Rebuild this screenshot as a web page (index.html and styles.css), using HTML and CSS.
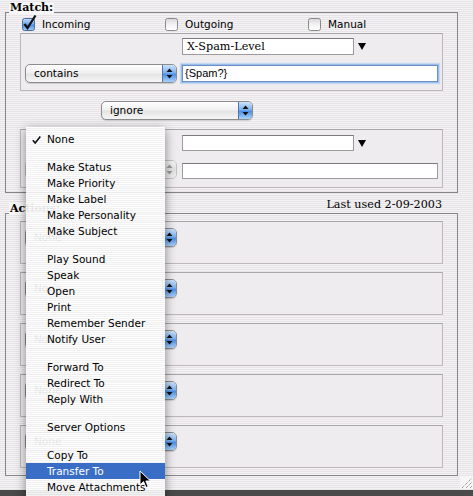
FILE: index.html
```html
<!DOCTYPE html>
<html>
<head>
<meta charset="utf-8">
<link rel="stylesheet" href="styles.css">
</head>
<body>
<div class="window">
  <div class="group-head">
    <span class="title">Match:</span>
  </div>
  <div class="group match">
    <div class="checks">
      <label class="check">
        <svg class="cb" width="16" height="16" viewBox="0 0 16 16">
          <defs>
            <linearGradient id="blue" x1="0" y1="0" x2="0" y2="1">
              <stop offset="0" stop-color="#c4dcf8"/>
              <stop offset="0.45" stop-color="#76aaea"/>
              <stop offset="0.55" stop-color="#4d8ce0"/>
              <stop offset="1" stop-color="#a6d0f8"/>
            </linearGradient>
          </defs>
          <rect x="0.5" y="3.5" width="12" height="12" rx="2" fill="url(#blue)" stroke="#4b6e9e"/>
          <path d="M2.5 9 L5.5 13 L13.5 0.5" fill="none" stroke="#111" stroke-width="2.2" stroke-linejoin="miter"/>
        </svg>
        <span>Incoming</span>
      </label>
      <label class="check">
        <svg class="cb" width="16" height="16" viewBox="0 0 16 16">
          <defs>
            <linearGradient id="gray" x1="0" y1="0" x2="0" y2="1">
              <stop offset="0" stop-color="#d8d8d8"/>
              <stop offset="0.5" stop-color="#f2f2f2"/>
              <stop offset="1" stop-color="#ffffff"/>
            </linearGradient>
          </defs>
          <rect x="0.5" y="3.5" width="12" height="12" rx="2" fill="url(#gray)" stroke="#8a8a8a"/>
        </svg>
        <span>Outgoing</span>
      </label>
      <label class="check">
        <svg class="cb" width="16" height="16" viewBox="0 0 16 16">
          <rect x="0.5" y="3.5" width="12" height="12" rx="2" fill="url(#gray)" stroke="#8a8a8a"/>
        </svg>
        <span>Manual</span>
      </label>
    </div>

    <div class="panel">
      <div class="row first">
        <div class="spacer"></div>
        <div class="field combo serif">X-Spam-Level</div>
        <svg class="tri" width="8" height="7" viewBox="0 0 8 7"><polygon points="0,0 8,0 4,7" fill="#000"/></svg>
      </div>
      <div class="row">
        <div class="popup">
          <span class="popup-text">contains</span>
          <span class="cap">
            <svg width="7" height="11" viewBox="0 0 7 11"><polygon points="3.5,0.5 6.5,4 0.5,4" fill="#111"/><polygon points="0.5,7 6.5,7 3.5,10.5" fill="#111"/></svg>
          </span>
        </div>
        <div class="field wide focus">{Spam?}</div>
      </div>
    </div>

    <div class="ignore-row">
      <div class="popup">
        <span class="popup-text">ignore</span>
        <span class="cap">
          <svg width="7" height="11" viewBox="0 0 7 11"><polygon points="3.5,0.5 6.5,4 0.5,4" fill="#111"/><polygon points="0.5,7 6.5,7 3.5,10.5" fill="#111"/></svg>
        </span>
      </div>
    </div>

    <div class="panel second">
      <div class="row first">
        <div class="spacer"></div>
        <div class="field combo short"></div>
        <svg class="tri" width="8" height="7" viewBox="0 0 8 7"><polygon points="0,0 8,0 4,7" fill="#000"/></svg>
      </div>
      <div class="row">
        <div class="popup disabled">
          <span class="popup-text">None</span>
          <span class="cap">
            <svg width="7" height="11" viewBox="0 0 7 11"><polygon points="3.5,0.5 6.5,4 0.5,4" fill="#9a9a9a"/><polygon points="0.5,7 6.5,7 3.5,10.5" fill="#9a9a9a"/></svg>
          </span>
        </div>
        <div class="field wide low"></div>
      </div>
    </div>
  </div>

  <div class="group-head actions-head">
    <span class="title">Actions:</span>
    <span class="last">Last used 2-09-2003</span>
  </div>
  <div class="group actions">
    <div class="panel action">
      <div class="popup"><span class="popup-text">None</span><span class="cap"><svg width="7" height="11" viewBox="0 0 7 11"><polygon points="3.5,0.5 6.5,4 0.5,4" fill="#111"/><polygon points="0.5,7 6.5,7 3.5,10.5" fill="#111"/></svg></span></div>
    </div>
    <div class="panel action">
      <div class="popup"><span class="popup-text">None</span><span class="cap"><svg width="7" height="11" viewBox="0 0 7 11"><polygon points="3.5,0.5 6.5,4 0.5,4" fill="#111"/><polygon points="0.5,7 6.5,7 3.5,10.5" fill="#111"/></svg></span></div>
    </div>
    <div class="panel action">
      <div class="popup"><span class="popup-text">None</span><span class="cap"><svg width="7" height="11" viewBox="0 0 7 11"><polygon points="3.5,0.5 6.5,4 0.5,4" fill="#111"/><polygon points="0.5,7 6.5,7 3.5,10.5" fill="#111"/></svg></span></div>
    </div>
    <div class="panel action">
      <div class="popup"><span class="popup-text">None</span><span class="cap"><svg width="7" height="11" viewBox="0 0 7 11"><polygon points="3.5,0.5 6.5,4 0.5,4" fill="#111"/><polygon points="0.5,7 6.5,7 3.5,10.5" fill="#111"/></svg></span></div>
    </div>
    <div class="panel action">
      <div class="popup"><span class="popup-text">None</span><span class="cap"><svg width="7" height="11" viewBox="0 0 7 11"><polygon points="3.5,0.5 6.5,4 0.5,4" fill="#111"/><polygon points="0.5,7 6.5,7 3.5,10.5" fill="#111"/></svg></span></div>
    </div>
  </div>

  <div class="footer">
    <svg class="grip" width="13" height="13" viewBox="0 0 13 13">
      <rect width="13" height="13" fill="#f6f6f6"/>
      <path d="M2 12 L12 2 M6 12 L12 6 M10 12 L12 10" stroke="#7a7a7a" stroke-width="1" stroke-dasharray="1 1"/>
    </svg>
  </div>
</div>

<div class="menu">
  <div class="item checked">
    <svg class="tick" width="9" height="8" viewBox="0 0 9 8"><path d="M0.8 4.2 L3.2 7 L8.3 0.6" fill="none" stroke="#111" stroke-width="1.6"/></svg>
    None
  </div>
  <div class="sep"></div>
  <div class="item">Make Status</div>
  <div class="item">Make Priority</div>
  <div class="item">Make Label</div>
  <div class="item">Make Personality</div>
  <div class="item">Make Subject</div>
  <div class="sep"></div>
  <div class="item">Play Sound</div>
  <div class="item">Speak</div>
  <div class="item">Open</div>
  <div class="item">Print</div>
  <div class="item">Remember Sender</div>
  <div class="item">Notify User</div>
  <div class="sep"></div>
  <div class="item">Forward To</div>
  <div class="item">Redirect To</div>
  <div class="item">Reply With</div>
  <div class="sep"></div>
  <div class="item">Server Options</div>
  <div class="sep"></div>
  <div class="item">Copy To</div>
  <div class="item active">Transfer To</div>
  <div class="item">Move Attachments</div>
</div>

<svg class="cursor" width="13" height="19" viewBox="0 0 13 19">
  <path d="M1 1 L1 15 L4.5 11.6 L7 17.5 L9.2 16.6 L6.8 11 L11.5 11 Z" fill="#000" stroke="#fff" stroke-width="1" stroke-linejoin="round"/>
</svg>
</body>
</html>
```

FILE: styles.css
```css
html, body {
  margin: 0;
  padding: 0;
}

body {
  width: 473px;
  height: 496px;
  overflow: hidden;
  position: relative;
  background: linear-gradient(#6a6a6a, #4a4a4a);
  font-family: "DejaVu Sans", "Noto Sans", sans-serif;
  font-size: 10.5px;
  color: #000;
}

.window {
  height: 490px;
  box-sizing: border-box;
  padding: 0 15px 0 5px;
  background: repeating-linear-gradient(to bottom, #f4f2f4 0, #f4f2f4 1px, #e6e4e6 1px, #e6e4e6 2px);
}

.serif {
  font-family: "DejaVu Serif", "Liberation Serif", serif;
}

.group-head {
  height: 12px;
  display: flex;
  align-items: flex-end;
  justify-content: space-between;
}

.title {
  font-family: "DejaVu Serif", "Liberation Serif", serif;
  font-weight: bold;
  font-size: 11px;
  line-height: 12px;
  margin: 0 0 -2px 4px;
  padding: 0 1px;
  background: #f7f6f7;
  position: relative;
  z-index: 1;
}

.actions-head {
  height: 20px;
  padding-right: 16px;
}

.last {
  font-family: "DejaVu Serif", "Liberation Serif", serif;
  font-size: 11.2px;
  line-height: 12px;
  margin-bottom: 2px;
}

.group {
  border: 1px solid #868686;
  padding: 3px 14px 3px 14px;
}

.match {
  padding-bottom: 4px;
}

.checks {
  display: grid;
  grid-template-columns: 143px 143px 1fr;
  height: 17px;
  padding-left: 2px;
}

.check {
  display: flex;
  align-items: center;
  height: 17px;
  line-height: 17px;
}

.cb {
  margin-top: -4px;
  margin-right: 4px;
  flex: none;
}

.panel {
  border: 1px solid #bcb8bc;
  border-top-color: #a9a6a9;
  background: #efecef;
  padding: 4px 4px 7px 4px;
}

.row {
  display: flex;
  align-items: center;
}

.row + .row {
  margin-top: 9px;
}

.spacer {
  width: 157px;
  flex: none;
}

.popup {
  width: 152px;
  height: 19px;
  box-sizing: border-box;
  flex: none;
  margin-right: 5px;
  display: flex;
  border: 1px solid #8c8c8c;
  border-radius: 5px;
  background: linear-gradient(#ffffff, #f0f0f0 45%, #e4e4e4 55%, #f6f6f6);
  box-shadow: 0 1px 1px rgba(0, 0, 0, 0.15);
  overflow: hidden;
}

.popup-text {
  flex: 1;
  line-height: 17px;
  padding-left: 8px;
}

.cap {
  width: 13px;
  flex: none;
  display: flex;
  align-items: center;
  justify-content: center;
  border-left: 1px solid #4d76b0;
  background: linear-gradient(#cde2fa, #7db1ee 45%, #4e8ee2 55%, #a9d2f9);
}

.popup.disabled {
  border-color: #c2c2c2;
  box-shadow: none;
  background: #f2f2f2;
}

.popup.disabled .popup-text {
  color: #c4c4c4;
}

.popup.disabled .cap {
  border-left-color: #c2c2c2;
  background: linear-gradient(#f4f4f4, #e2e2e2 50%, #eeeeee);
}

.field {
  height: 17px;
  box-sizing: border-box;
  background: #fff;
  border: 1px solid #9c9c9c;
  border-top-color: #7b7b7b;
  line-height: 15px;
  padding-left: 4px;
  white-space: nowrap;
  overflow: hidden;
}

.combo {
  width: 172px;
  flex: none;
  font-size: 11.2px;
}

.combo.short {
  height: 16px;
}

.tri {
  margin-left: 4px;
  flex: none;
}

.wide {
  flex: 1;
  padding-left: 2px;
  font-family: "Liberation Sans", Arial, sans-serif;
  font-size: 11px;
}

.wide.low {
  height: 16px;
  margin-top: 2px;
}

.focus {
  border-color: #6c8fc6;
  box-shadow: 0 0 0 1px #9bbde9, 0 0 1px 2px #c3d8f3;
}

.ignore-row {
  margin-top: 10px;
  padding-left: 81px;
}

.panel.second {
  margin-top: 9px;
  padding-top: 5px;
  padding-bottom: 8px;
}

.second .row + .row {
  margin-top: 9px;
}

.actions {
  padding-top: 7px;
  padding-bottom: 7px;
}

.panel.action {
  height: 43px;
  box-sizing: border-box;
  padding: 6px 4px 0 4px;
}

.panel.action + .panel.action {
  margin-top: 8px;
}

.footer {
  height: 14px;
  display: flex;
  justify-content: flex-end;
  align-items: flex-end;
  margin-right: -15px;
}

.grip {
  display: block;
  margin-bottom: 1px;
}

/* popup menu overlay */
.menu {
  position: absolute;
  left: 26px;
  top: 127px;
  width: 139px;
  padding-top: 4px;
  padding-bottom: 8px;
  background: repeating-linear-gradient(to bottom, rgba(255, 255, 255, 0.93) 0, rgba(255, 255, 255, 0.93) 1px, rgba(241, 241, 241, 0.93) 1px, rgba(241, 241, 241, 0.93) 2px);
  box-shadow: 0 3px 10px rgba(0, 0, 0, 0.45);
  z-index: 5;
}

.item {
  height: 16px;
  line-height: 16px;
  padding-left: 21px;
  position: relative;
  white-space: nowrap;
}

.item .tick {
  position: absolute;
  left: 6px;
  top: 5px;
}

.item.active {
  background: #3a6ec6;
  color: #fff;
}

.sep {
  height: 12px;
}

.cursor {
  position: absolute;
  left: 139px;
  top: 470px;
  z-index: 6;
}
```
